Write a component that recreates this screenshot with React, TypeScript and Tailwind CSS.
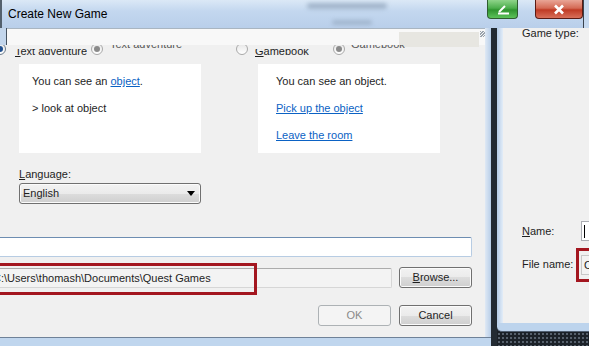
const btn =
  "flex items-center justify-center rounded-[3px] border border-[#707070] bg-[linear-gradient(#f2f2f2_0%,#ebebeb_50%,#dddddd_50%,#cfcfcf_100%)] shadow-[inset_0_0_0_1px_#fbfbfb] text-[#1e1e1e]"

function Radio({ checked, faded }: { checked?: boolean; faded?: boolean }) {
  return (
    <div
      className={`w-[12px] h-[12px] shrink-0 rounded-full border flex items-center justify-center bg-[linear-gradient(#e6e6e6,#ffffff)] ${
        faded ? "border-[#a9a9a9]" : "border-[#6c7c8c]"
      }`}
    >
      {checked && (
        <div className={`w-[6px] h-[6px] rounded-full ${faded ? "bg-[#8a8a8a]" : "bg-[#1f4f8f]"}`} />
      )}
    </div>
  )
}

// a radio label that only shows its lower part (the screenshot is half-repainted)
function CutLabel({ children, ghost }: { children: React.ReactNode; ghost?: boolean }) {
  if (ghost) {
    return (
      <div className="h-[4px] overflow-hidden">
        <div className="-mt-[7px] leading-[13px] whitespace-nowrap text-[#555]">{children}</div>
      </div>
    )
  }
  return (
    <div className="mt-[4px] h-[8px] overflow-hidden">
      <div className="-mt-[4px] leading-[13px] whitespace-nowrap">{children}</div>
    </div>
  )
}

function TitleBar() {
  return (
    <div className="relative h-[28px] shrink-0 flex items-start bg-[linear-gradient(#dbe8f6_0%,#c3d7ef_40%,#b9cfea_100%)] border-l-2 border-[#53606d]">
      {/* blurred glass behind */}
      <div className="absolute left-[305px] top-[3px] w-[80px] h-[6px] rounded-full bg-[#8fa3ba] blur-[2px] opacity-70" />
      <div className="absolute left-[330px] top-[20px] w-[40px] h-[5px] rounded-full bg-[#8fa3ba] blur-[2px] opacity-60" />
      <span className="pl-[6px] leading-[28px] text-[12px] text-black">Create New Game</span>
      <div className="flex-1" />
      <div className="w-[31px] h-[19px] shrink-0 rounded-b-[4px] border border-t-0 border-[#2f5d2f] bg-[linear-gradient(#8fd48a_0%,#4cae4c_45%,#2f942f_55%,#5cc25a_100%)] flex items-center justify-center">
        <svg width="16" height="12" viewBox="0 0 16 12">
          <path d="M4 9 L10 3" stroke="#fff" strokeWidth="2" fill="none" />
          <path d="M3 10.5 H14" stroke="#fff" strokeWidth="2" fill="none" />
        </svg>
      </div>
      <div className="w-[17px] shrink-0" />
      <div className="w-[48px] h-[19px] shrink-0 rounded-b-[4px] border border-t-0 border-[#5a1b14] bg-[linear-gradient(#e9a596_0%,#d46a55_45%,#bf3a24_55%,#d8705a_100%)] flex items-center justify-center">
        <svg width="14" height="11" viewBox="0 0 14 11">
          <path d="M3 1.5 L11 9.5 M11 1.5 L3 9.5" stroke="#fff" strokeWidth="2.6" fill="none" />
        </svg>
      </div>
      <div className="w-[6px] h-full shrink-0 border-l border-[#3a434d] bg-[#c6d9ef]" />
    </div>
  )
}

function Dialog() {
  return (
    <div className="w-[491px] shrink-0 flex flex-col">
      <div className="flex h-[309px]">
        <div className="w-[485px] shrink-0 bg-[#f0f0f0] flex flex-col overflow-hidden">
          {/* group box top edge */}
          <div className="h-[17px] shrink-0 flex">
            <div className="w-[7px] shrink-0 bg-[#c3d6ec] border-r border-[#46525f]" />
            <div className="flex-1 flex items-start bg-[#f8f8f8] border-t border-[#a9b5c1]">
              <div className="ml-[392px] mt-[3px] w-[80px] h-[15px] shrink-0 bg-[#e7e6e1]" />
              <div className="ml-[1px] mt-[2px] w-[5px] h-[6px] shrink-0 bg-[repeating-linear-gradient(135deg,#9aa3ad_0_1px,#f5f5f5_1px_2px)]" />
            </div>
          </div>

          {/* game type radios, clipped */}
          <div className="h-[12px] shrink-0 overflow-hidden flex items-start">
            <div className="-ml-[6px] w-[97px] flex items-start gap-[9px] shrink-0">
              <div className="-mt-[2px]"><Radio checked /></div>
              <CutLabel><u>T</u>ext adventure</CutLabel>
            </div>
            <div className="w-[145px] flex items-start gap-[7px] shrink-0">
              <div className="-mt-[2px]"><Radio checked faded /></div>
              <CutLabel ghost>Text adventure</CutLabel>
            </div>
            <div className="w-[97px] flex items-start gap-[7px] shrink-0">
              <div className="-mt-[2px]"><Radio faded /></div>
              <CutLabel><u>G</u>amebook</CutLabel>
            </div>
            <div className="flex items-start gap-[6px] shrink-0">
              <div className="-mt-[2px]"><Radio checked faded /></div>
              <CutLabel ghost>Gamebook</CutLabel>
            </div>
          </div>

          {/* previews */}
          <div className="mt-[7px] flex pl-[19px] gap-[57px]">
            <div className="w-[182px] h-[89px] shrink-0 bg-white pl-[13px] pt-[4px] leading-[27px]">
              <div>
                You can see an <span className="text-[#0b62c4] underline">object</span>.
              </div>
              <div>&gt; look at object</div>
            </div>
            <div className="w-[182px] h-[89px] shrink-0 bg-white pl-[18px] pt-[4px] leading-[27px]">
              <div>You can see an object.</div>
              <div className="text-[#0b62c4] underline">Pick up the object</div>
              <div className="text-[#0b62c4] underline">Leave the room</div>
            </div>
          </div>

          {/* language */}
          <div className="mt-[15px] pl-[19px] leading-[13px]">
            <u>L</u>anguage:
          </div>
          <div className="mt-[2px] ml-[19px] w-[182px] h-[21px] shrink-0 rounded-[3px] border border-[#707070] bg-[linear-gradient(#f2f2f2_0%,#ebebeb_50%,#dddddd_50%,#cfcfcf_100%)] shadow-[inset_0_0_0_1px_#fbfbfb] flex items-center pl-[3px] pr-[5px]">
            <span className="flex-1">English</span>
            <svg width="8" height="5" viewBox="0 0 8 5">
              <path d="M0 0 H8 L4 5 Z" fill="#000" />
            </svg>
          </div>

          {/* name */}
          <div className="mt-[33px] -ml-[2px] w-[474px] h-[20px] shrink-0 bg-white border border-[#b7cce3] border-t-[#6d8db1] rounded-[2px]" />

          {/* path + browse */}
          <div className="relative mt-[10px] flex items-start gap-[7px]">
            <div className="-ml-[2px] mt-[1px] w-[394px] h-[20px] shrink-0 bg-[#f3f3f3] border border-[#d6d6d6] border-t-[#acacac] rounded-[2px] flex items-center overflow-hidden">
              <span className="-ml-[6px] whitespace-nowrap">C:\Users\thomash\Documents\Quest Games</span>
            </div>
            <div className={`${btn} w-[73px] h-[21px] shrink-0`}>
              <span>
                <u>B</u>rowse...
              </span>
            </div>
            <div className="absolute -left-[3px] -top-[4px] w-[260px] h-[32px] border-[3px] border-[#a3161f]" />
          </div>

          {/* ok / cancel */}
          <div className="mt-[17px] flex justify-end gap-[8px] pr-[13px]">
            <div className="w-[73px] h-[21px] shrink-0 rounded-[3px] border border-[#adb2b5] bg-[#f4f4f4] text-[#8a8a8a] flex items-center justify-center">
              OK
            </div>
            <div className={`${btn} w-[73px] h-[21px] shrink-0`}>Cancel</div>
          </div>
        </div>
        <div className="w-[6px] shrink-0 bg-[linear-gradient(90deg,#dfe9f5,#b8cee8)]" />
      </div>
      <div className="h-[9px] bg-[#c0d6ee] border-t border-[#6f8298]" />
    </div>
  )
}

function RightWindow() {
  return (
    <div className="flex-1 min-w-0 flex flex-col">
      <div className="flex h-[295px] shrink-0">
        <div className="w-[6px] shrink-0 bg-[linear-gradient(90deg,#b5cce7,#e3edf8)]" />
        <div className="flex-1 min-w-0 bg-[#f0f0f0] pl-[19px] flex flex-col overflow-hidden">
          <div className="-mt-[1px] flex items-start">
            <span className="leading-[13px] whitespace-nowrap">Game type:</span>
            <div className="ml-[12px] mt-[1px]"><Radio faded /></div>
          </div>
          <div className="mt-[181px] h-[20px] flex items-center">
            <span className="w-[59px] shrink-0">
              <u>N</u>ame:
            </span>
            <div className="w-[20px] h-[20px] shrink-0 bg-white border border-[#abadb3] border-r-0 flex items-center pl-[2px]">
              <div className="w-[1px] h-[13px] bg-black" />
            </div>
          </div>
          <div className="mt-[7px] h-[34px] flex items-center">
            <span className="w-[54px] shrink-0 -mt-[2px] whitespace-nowrap">File name:</span>
            <div className="w-[30px] h-[34px] shrink-0 border-[3px] border-r-0 border-[#a3161f] flex items-center pl-[2px]">
              <div className="w-[26px] h-[20px] shrink-0 bg-[#f3f3f3] border border-[#c8c8c8] border-r-0 flex items-center pl-[2px]">
                C
              </div>
            </div>
          </div>
        </div>
      </div>
      <div className="h-[9px] shrink-0 bg-[#bdd4ed] rounded-bl-[5px] border-b border-[#4f5e70]" />
      <div className="flex-1 bg-[#1b2128] bg-[radial-gradient(circle,#56606c_0.8px,transparent_1px)] bg-[length:4px_4px]" />
    </div>
  )
}

export default function App() {
  return (
    <div className="w-[589px] h-[346px] overflow-hidden flex flex-col bg-[#1c2229] font-['Liberation_Sans',Arial,sans-serif] text-[11px] text-[#1e1e1e]">
      <TitleBar />
      <div className="flex h-[318px] shrink-0">
        <Dialog />
        <div className="w-[6px] shrink-0 bg-[#232b33]" />
        <RightWindow />
      </div>
    </div>
  )
}
